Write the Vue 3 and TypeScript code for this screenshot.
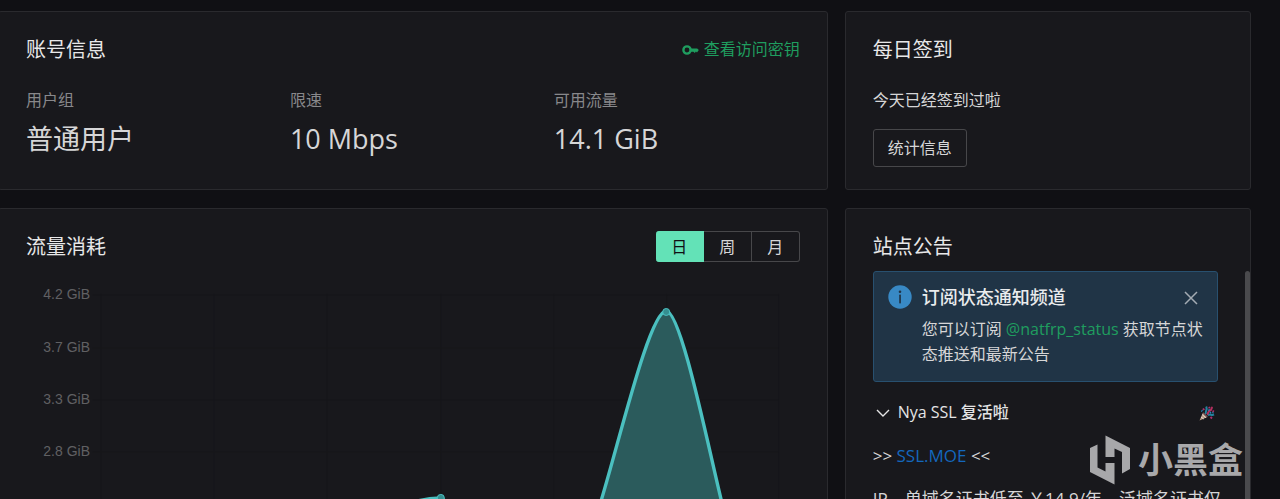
<script setup lang="ts">
import { ref } from 'vue'

interface Stat {
  label: string
  value: string
}

const stats: Stat[] = [
  { label: '用户组', value: '普通用户' },
  { label: '限速', value: '10 Mbps' },
  { label: '可用流量', value: '14.1 GiB' },
]

const ranges: string[] = ['日', '周', '月']
const range = ref<string>('日')

const yTicks = [
  { label: '4.2 GiB', y: 21 },
  { label: '3.7 GiB', y: 74 },
  { label: '3.3 GiB', y: 126 },
  { label: '2.8 GiB', y: 178 },
]
const xTicks: number[] = [75, 188, 301, 415, 528, 641, 753]

const alertOpen = ref<boolean>(true)
const newsOpen = ref<boolean>(true)
</script>

<template>
  <div class="page">
    <main class="grid">
      <section class="card wide">
        <header class="head">
          <h2>账号信息</h2>
          <a class="key-link" href="#key">
            <svg class="key" viewBox="0 0 17 12" aria-hidden="true">
              <circle cx="5" cy="6" r="3.6" fill="none" stroke="currentColor" stroke-width="2.4" />
              <path d="M8.5 4.4H15.2L16.8 6L15 8.4L13.9 7.6L12.8 9L11.4 7.8H8.5Z" fill="currentColor" />
            </svg>
            查看访问密钥
          </a>
        </header>
        <dl class="stats">
          <div v-for="s in stats" :key="s.label">
            <dt>{{ s.label }}</dt>
            <dd>{{ s.value }}</dd>
          </div>
        </dl>
      </section>

      <section class="card">
        <header class="head">
          <h2>每日签到</h2>
        </header>
        <p class="sign-text">今天已经签到过啦</p>
        <button class="btn" type="button">统计信息</button>
      </section>

      <section class="card wide">
        <header class="head">
          <h2>流量消耗</h2>
          <div class="radios" role="radiogroup" aria-label="流量消耗">
            <label v-for="r in ranges" :key="r" class="radio" :class="{ active: range === r }">
              <input v-model="range" type="radio" name="range" :value="r" />
              <span>{{ r }}</span>
            </label>
          </div>
        </header>
        <svg class="chart" viewBox="0 0 774 260" role="img" aria-label="流量消耗">
          <g class="gridlines">
            <line v-for="x in xTicks" :key="x" :x1="x" :x2="x" y1="21" y2="260" />
            <line v-for="t in yTicks" :key="t.y" x1="67" x2="753" :y1="t.y + 1" :y2="t.y + 1" />
          </g>
          <text v-for="t in yTicks" :key="t.label" class="tick" x="64" :y="t.y + 5" text-anchor="end">{{ t.label }}</text>
          <path
            class="area"
            d="M301 330C335 250 375 225 415 225C424 225 450 300 528 420C545 400 562 275 575 229C594 167 624 38 640.500 38C655 38 681 167 696 229C712 300 735 380 753 400V500H301Z"
          />
          <path
            class="curve"
            d="M301 330C335 250 375 225 415 225C424 225 450 300 528 420C545 400 562 275 575 229C594 167 624 38 640.500 38C655 38 681 167 696 229C712 300 735 380 753 400"
          />
          <circle class="dot" cx="415" cy="225" r="3.500" />
          <circle class="dot" cx="640.500" cy="39" r="3.500" />
        </svg>
      </section>

      <section class="card">
        <header class="head">
          <h2>站点公告</h2>
        </header>
        <div v-if="alertOpen" class="alert" role="alert">
          <svg class="info" viewBox="0 0 24 24" aria-hidden="true">
            <circle cx="12" cy="12" r="11.700" fill="#3889c5" />
            <circle cx="12" cy="6.800" r="1.300" fill="#203446" />
            <rect x="11.200" y="9.600" width="1.700" height="8.800" rx=".6" fill="#203446" />
          </svg>
          <div class="alert-body">
            <div class="alert-head">
              <h3>订阅状态通知频道</h3>
              <button class="close" type="button" aria-label="关闭" @click="alertOpen = false">
                <svg viewBox="0 0 14 14" aria-hidden="true">
                  <path d="M1 1L13 13M13 1L1 13" fill="none" stroke="currentColor" stroke-width="1.500" />
                </svg>
              </button>
            </div>
            <p>您可以订阅 <a href="#status">@natfrp_status</a> 获取节点状态推送和最新公告</p>
          </div>
        </div>
        <button class="fold" type="button" :aria-expanded="newsOpen" @click="newsOpen = !newsOpen">
          <svg class="chevron" viewBox="0 0 14 14" aria-hidden="true">
            <path d="M1 4L7 10L13 4" fill="none" stroke="currentColor" stroke-width="1.400" />
          </svg>
          <span>Nya SSL 复活啦</span>
          <svg class="party" viewBox="0 0 16 16" aria-hidden="true">
            <path d="M0.500 15.500L4 7.500L8.500 12Z" fill="#b79a86" />
            <path d="M2 12L4.800 14M3.200 9.600L6.800 12.800" stroke="#e6d8cc" stroke-width="1" />
            <path d="M4 7.500C5 7 9 11 8.500 12C7.500 12.500 3.600 8.600 4 7.500Z" fill="#6b4a4c" />
            <path d="M7 9C5.600 6 9 5.400 7.200 1.500M9 10.500C10.500 8 12.500 11 15 9.500" fill="none" stroke="#22849f" stroke-width="2" />
            <path d="M8 9.500C9.500 8.500 9 6 11 5.500C13 5 12 3 13.500 2" fill="none" stroke="#b5305f" stroke-width="2" />
            <path d="M4 3.500L5.200 5M10 2L10.600 3.400M13.500 6L15 6.600M11.500 12L13 13.400" stroke="#a8316f" stroke-width="2" />
            <path d="M9.500 4.500L10.300 5.200M13.500 8L14.400 7.600M2.500 5.500L3.300 6.200M11 8L12 7.200" stroke="#278fc0" stroke-width="1.800" />
          </svg>
        </button>
        <div v-if="newsOpen" class="news">
          <p>&gt;&gt; <a href="#ssl">SSL.MOE</a> &lt;&lt;</p>
          <p>IP、单域名证书低至 ￥14.9/年，泛域名证书仅</p>
        </div>
        <div class="scrollbar"></div>
      </section>
    </main>

    <div class="mark">
      <svg viewBox="0 0 42 50" aria-hidden="true">
        <path d="M16.500 0.500L41 13V34L33 38.500V17L25.500 13.500V22H16.500ZM25.500 49.500L1 37V13L8.500 9.500V32.500L16.500 36.500V28H25.500Z" fill="currentColor" />
      </svg>
      <span>小黑盒</span>
    </div>
  </div>
</template>

<style>
body {
  margin: 0;
  background: #101014;
}
</style>

<style scoped>
.page {
  position: relative;
  box-sizing: border-box;
  height: 100vh;
  overflow: hidden;
  background: #101014;
  color: #d6d6d7;
  font-family: "Open Sans", "Noto Sans CJK SC", sans-serif;
  font-size: 16px;
  line-height: 25px;
}
.grid {
  display: grid;
  grid-template-columns: repeat(3, 1fr);
  gap: 18px 17px;
  margin: 11px 29px 0 -2px;
}
.card {
  position: relative;
  box-sizing: border-box;
  min-width: 0;
  padding: 21px 27px 22px;
  border: 1px solid #2a2a2e;
  border-radius: 3px;
  background: #18181c;
}
.wide {
  grid-column: span 2;
}
.head {
  display: flex;
  align-items: center;
  justify-content: space-between;
  height: 33px;
}
h2, h3, p, dl, dd {
  margin: 0;
}
h2 {
  color: #e8e8e9;
  font-size: 20px;
  font-weight: 400;
}
a {
  color: #1f9d5f;
  text-decoration: none;
}
button {
  font: inherit;
  color: inherit;
  background: none;
  cursor: pointer;
}
.key-link {
  display: flex;
  align-items: center;
  gap: 5px;
}
.key {
  width: 17px;
  height: 12px;
}
.stats {
  display: grid;
  grid-template-columns: repeat(3, 1fr);
  gap: 18px;
  margin-top: 22px;
}
dt {
  color: #88888b;
}
dd {
  margin-top: 4px;
  font-size: 27px;
  line-height: 44px;
}
.sign-text {
  margin-top: 22px;
}
.btn {
  height: 38px;
  margin-top: 16px;
  padding: 0 14px;
  border: 1px solid #47474a;
  border-radius: 3px;
}
.radios {
  display: flex;
}
.radio {
  position: relative;
  box-sizing: border-box;
  width: 48px;
  height: 31px;
  border: 1px solid #47474a;
  border-left-width: 0;
  text-align: center;
  line-height: 30px;
  cursor: pointer;
}
.radio:first-child {
  border-radius: 3px 0 0 3px;
}
.radio:last-child {
  border-radius: 0 3px 3px 0;
}
.radio.active {
  border-color: #63e2b7;
  background: #63e2b7;
  color: #101014;
}
.radio input {
  position: absolute;
  inset: 0;
  margin: 0;
  opacity: 0;
}
.chart {
  display: block;
  width: 100%;
  margin-top: 10px;
}
.gridlines {
  stroke: #16161a;
  stroke-width: 1;
}
.tick {
  fill: #606063;
  font-family: "Liberation Sans", sans-serif;
  font-size: 14px;
}
.area {
  fill: #2b5b5c;
}
.curve {
  fill: none;
  stroke: #4bc0c0;
  stroke-width: 3.4;
}
.dot {
  fill: #358e90;
  stroke: #4bc0c0;
  stroke-width: 1;
}
.alert {
  display: flex;
  gap: 10px;
  box-sizing: border-box;
  margin: 8px 5px 0 0;
  padding: 13px 10px 14px 14px;
  border: 1px solid #28506f;
  border-radius: 3px;
  background: #203446;
}
.info {
  flex: none;
  width: 24px;
  height: 24px;
}
.alert-body {
  flex: 1;
  min-width: 0;
}
.alert-head {
  display: flex;
  align-items: center;
  justify-content: space-between;
  margin-bottom: 7px;
}
h3 {
  color: #e9ebed;
  font-size: 18px;
  font-weight: 500;
}
.close {
  display: flex;
  padding: 0 9px;
  border: 0;
  color: #a3abb3;
}
.close svg {
  width: 14px;
  height: 14px;
}
.fold {
  display: flex;
  align-items: center;
  gap: 8px;
  width: 100%;
  margin-top: 18px;
  padding: 0 8px 0 3px;
  border: 0;
  color: #e4e4e5;
  font-weight: 500;
  text-align: left;
}
.fold span {
  flex: 1;
}
.chevron {
  width: 14px;
  height: 14px;
}
.party {
  width: 16px;
  height: 16px;
}
.news {
  margin-top: 18px;
  font-size: 17px;
  white-space: nowrap;
}
.news p + p {
  margin-top: 18px;
}
.news a {
  color: #1467bd;
}
.scrollbar {
  position: absolute;
  top: 62px;
  right: 0;
  bottom: 0;
  width: 5px;
  border-radius: 3px;
  background: #4a4a4d;
}
.mark {
  position: absolute;
  right: 37px;
  bottom: 14px;
  display: flex;
  align-items: center;
  gap: 7px;
  color: #a8a8aa;
  font-size: 35px;
  font-weight: 700;
  line-height: 50px;
}
.mark svg {
  width: 42px;
  height: 50px;
}
</style>
